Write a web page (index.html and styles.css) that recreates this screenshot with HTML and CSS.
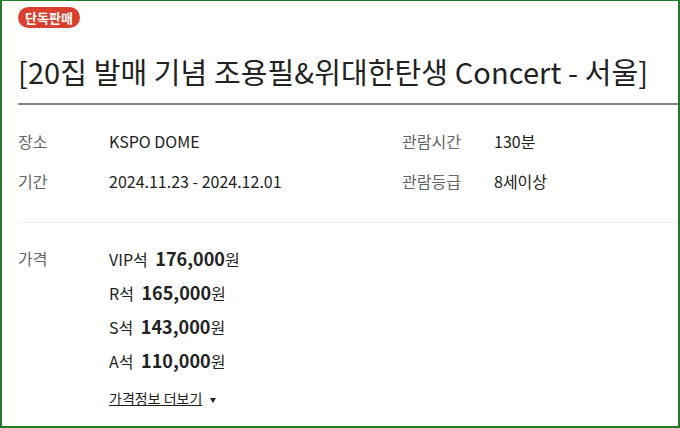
FILE: index.html
```html
<!DOCTYPE html>
<html>
  <head>
    <meta charset="UTF-8" />
    <title>조용필&위대한탄생 Concert</title>
    <link rel="stylesheet" href="styles.css">
  </head>
  <body>
    <div class="page">
      <span class="badge">단독판매</span>
      <h1 class="title">[20집 발매 기념 조용필&amp;위대한탄생 Concert - 서울]</h1>

      <div class="info">
        <div class="label">장소</div>
        <div class="value">KSPO DOME</div>
        <div class="label">관람시간</div>
        <div class="value">130분</div>
        <div class="label">기간</div>
        <div class="value">2024.11.23 - 2024.12.01</div>
        <div class="label">관람등급</div>
        <div class="value">8세이상</div>
      </div>

      <div class="price">
        <div class="label">가격</div>
        <ul class="price-list">
          <li>VIP석 <b>176,000</b>원</li>
          <li>R석 <b>165,000</b>원</li>
          <li>S석 <b>143,000</b>원</li>
          <li>A석 <b>110,000</b>원</li>
          <li class="more"><a href="#">가격정보 더보기</a><span class="caret"></span></li>
        </ul>
      </div>
    </div>
  </body>
</html>
```

FILE: styles.css
```css
body {
  margin: 0;
  font-family: "Noto Sans CJK KR", "Noto Sans", sans-serif;
  background-color: white;
  color: #222;
}

.page {
  height: 428px;
  box-sizing: border-box;
  border: 2px solid #1f7a22;
  border-top-width: 1px;
  padding: 6px 0 0 16px;
  overflow: hidden;
}

.badge {
  display: block;
  width: fit-content;
  height: 21px;
  line-height: 21px;
  padding: 0 7px;
  border-radius: 11px;
  background-color: #d9402e;
  color: white;
  font-size: 13px;
  font-weight: bold;
}

.title {
  margin: 23px 0 0;
  padding-bottom: 12px;
  border-bottom: 2px solid #888;
  font-size: 29px;
  font-weight: normal;
  line-height: 40px;
  letter-spacing: 0.1px;
}

.info {
  display: grid;
  grid-template-columns: 91px 293px 92px 1fr;
  grid-auto-rows: 40px;
  align-items: center;
  padding: 16px 0 21px;
  border-bottom: 1px solid #eee;
  font-size: 16px;
}

.label {
  color: #666;
}

.value {
  color: #222;
}

.price {
  display: flex;
  padding-top: 19px;
  font-size: 16px;
}

.price .label {
  width: 91px;
  line-height: 33px;
}

.price-list {
  list-style: none;
  margin: 0;
  padding: 0;
}

.price-list li {
  line-height: 33px;
}

.price-list b {
  margin-left: 4px;
  font-size: 18px;
}

.price-list .more {
  margin-top: 10px;
  line-height: 20px;
  font-size: 14px;
}

.more a {
  color: #222;
  text-decoration: underline;
}

.caret {
  display: inline-block;
  margin-left: 8px;
  vertical-align: middle;
  border-left: 3px solid transparent;
  border-right: 3px solid transparent;
  border-top: 5px solid #222;
}
```
